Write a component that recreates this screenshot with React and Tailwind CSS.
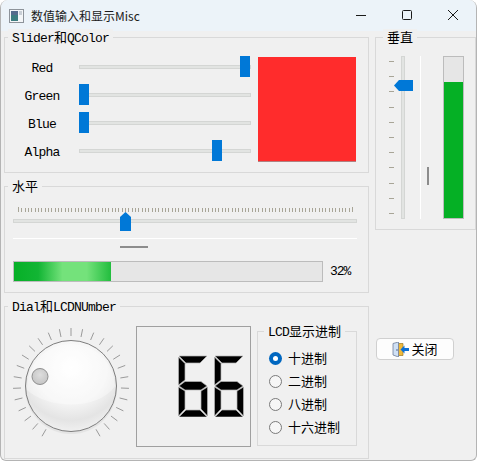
const cjk = "font-['Noto_Sans_CJK_SC',sans-serif]";
const mono = "font-['Liberation_Mono','Noto_Sans_CJK_SC',monospace]";

const Group = ({ title, className, legendClass = "left-[3px]", children }) => (
  <div className={`relative border border-[#d9d9d9] ${className}`}>
    <div className={`absolute top-[-9px] ${legendClass} bg-[#f0f0f0] px-[4px] text-[13px] tracking-[-0.8px] leading-[16px] whitespace-nowrap text-black ${mono}`}>{title}</div>
    {children}
  </div>
);

const C = ({ children }) => <span className={`text-[13px] tracking-normal ${cjk}`}>{children}</span>;

const HSlider = ({ label, offset }) => (
  <div className="flex items-center h-[21px]">
    <div className={`w-[74px] pt-[5px] text-center text-[13px] tracking-[-0.8px] text-black ${mono}`}>{label}</div>
    <div className="relative w-[172px] h-[4px] bg-[#e2e4e2] border border-[#d4d6d4]">
      <div className={`absolute top-[-10px] w-[10px] h-[21px] bg-[#0078d7] ${offset}`}></div>
    </div>
  </div>
);

const tickList = Array.from({ length: 101 }, (_, i) => i);

const HorizontalTicks = () => (
  <svg width="344" height="6" className="block">
    {tickList.map((i) => (
      <rect key={i} x={5 + i * 3.34} y={i === 100 || i === 0 ? 0 : 1} width="1" height={i === 100 || i === 0 ? 5 : 4} fill="#a8a597" shapeRendering="crispEdges" />
    ))}
  </svg>
);

const dialTicks = Array.from({ length: 27 }, (_, i) => -150 + i * (300 / 26));

const Dial = () => (
  <svg width="124" height="124" viewBox="0 0 124 124" className="block">
    <defs>
      <radialGradient id="face" cx="50%" cy="30%" r="72%">
        <stop offset="0" stopColor="#ffffff" />
        <stop offset="0.55" stopColor="#f4f4f4" />
        <stop offset="0.8" stopColor="#e4e4e4" />
        <stop offset="1" stopColor="#f2f2f2" />
      </radialGradient>
      <radialGradient id="knob" cx="50%" cy="40%" r="60%">
        <stop offset="0" stopColor="#dedede" />
        <stop offset="1" stopColor="#c4c4c4" />
      </radialGradient>
    </defs>
    {dialTicks.map((a) => {
      const r = (a * Math.PI) / 180;
      return (
        <line key={a} x1={62 + 50 * Math.sin(r)} y1={62 - 50 * Math.cos(r)} x2={62 + 58 * Math.sin(r)} y2={62 - 58 * Math.cos(r)} stroke="#9a9a9a" strokeWidth="1" />
      );
    })}
    <circle cx="62" cy="64" r="46" fill="#d8d8d8" opacity="0.5" />
    <circle cx="62" cy="62" r="45.5" fill="url(#face)" stroke="#7d7d7d" strokeWidth="1" />
    <path d="M18 66 A44 44 0 1 1 106 62 C90 86 40 86 18 66Z" fill="#ffffff" opacity="0.35" />
    <circle cx="31" cy="52.5" r="8" fill="url(#knob)" stroke="#8f8f8f" strokeWidth="1" />
  </svg>
);

const Digit = () => (
  <svg width="30" height="62" viewBox="0 0 30 62" className="block">
    <g fill="#000000" stroke="#b5b5b5" strokeWidth="0.7">
      <polygon points="1,1 29,1 22,8 8,8" />
      <polygon points="0.5,2 7,8.5 7,25 0.5,30" />
      <polygon points="1,31 7,26.5 23,26.5 29,31 23,35 7,35" />
      <polygon points="0.5,32 7,36 7,54 0.5,61" />
      <polygon points="29.5,32 23,36 23,54 29.5,61" />
      <polygon points="1,62 8,55 22,55 29,62" />
    </g>
  </svg>
);

const Radio = ({ label, checked }) => (
  <div className="flex items-center h-[23px]">
    {checked ? (
      <div className="w-[13px] h-[13px] rounded-full bg-[#0067c0] flex items-center justify-center">
        <div className="w-[5px] h-[5px] rounded-full bg-white"></div>
      </div>
    ) : (
      <div className="w-[13px] h-[13px] rounded-full border border-[#7a7a7a] bg-[#f6f6f6]"></div>
    )}
    <span className={`ml-[6px] pb-[2px] text-[13px] leading-[16px] text-black ${cjk}`}>{label}</span>
  </div>
);

const DoorIcon = () => (
  <svg width="17" height="15" viewBox="0 0 17 15" className="block">
    <path d="M6 1.5h5v12H6z" fill="#f0b93a" stroke="#9a7a2a" strokeWidth="0.7" />
    <path d="M1 1.5L6.5 0v15L1 13z" fill="#cfe0f5" stroke="#6f7f9c" strokeWidth="0.8" />
    <circle cx="5" cy="8" r="0.8" fill="#3f5a85" />
    <path d="M8.5 7.5L12.5 3.5V6H17V9H12.5V11.5Z" fill="#0a6fd6" />
  </svg>
);

export default function App() {
  return (
    <div className="w-[477px] h-[461px] bg-[#f0f0f0] border-l border-r border-b border-[#b4b4b4] border-t-[#a8a8a8] rounded-t-[8px] rounded-b-[6px] overflow-hidden flex flex-col">
      {/* title bar */}
      <div className="h-[31px] shrink-0 bg-[#ecf3f9] flex items-center">
        <svg width="15" height="14" viewBox="0 0 15 14" className="ml-[8px]">
          <rect x="0.5" y="0.5" width="14" height="13" fill="#f4f6f8" stroke="#8d939a" />
          <rect x="2" y="2" width="7" height="10" fill="#3d7d80" />
          <rect x="2" y="2" width="7" height="4" fill="#556b8c" />
          <rect x="10" y="2" width="3" height="4" fill="#c9cfd6" />
        </svg>
        <div className={`ml-[7px] text-[12px] text-[#1a1a1a] whitespace-nowrap ${cjk}`}>数值输入和显示Misc</div>
        <div className="ml-auto flex items-center h-full">
          <svg width="46" height="31" viewBox="0 0 46 31">
            <line x1="18" y1="15.5" x2="28" y2="15.5" stroke="#1a1a1a" />
          </svg>
          <svg width="46" height="31" viewBox="0 0 46 31">
            <rect x="18.5" y="10.5" width="9" height="9" rx="1" fill="none" stroke="#1a1a1a" />
          </svg>
          <svg width="46" height="31" viewBox="0 0 46 31">
            <path d="M18 10l10 10M28 10L18 20" stroke="#1a1a1a" fill="none" />
          </svg>
        </div>
      </div>

      <div className="flex flex-1 pt-[6px] pl-[3px]">
        {/* left column */}
        <div className="w-[365px] shrink-0 flex flex-col">
          <Group title={<>Slider<C>和</C>QColor</>} className="h-[136px] flex pt-[18px]">
            <div className="flex flex-col gap-[7px] w-[247px]">
              <HSlider label="Red" offset="left-[160px]" />
              <HSlider label="Green" offset="left-[-1px]" />
              <HSlider label="Blue" offset="left-[-1px]" />
              <HSlider label="Alpha" offset="left-[132px]" />
            </div>
            <div className="ml-[6px] w-[98px] h-[105px] bg-[#ff2c2c] border-b border-[#b08080] mt-[1px]"></div>
          </Group>

          <Group title={<C>水平</C>} className="h-[107px] mt-[13px] px-[8px]">
            <div className="pt-[20px] w-[344px]">
              <HorizontalTicks />
              <div className="relative mt-[6px] h-[4px] bg-[#e2e4e2] border border-[#d4d6d4]">
                <svg width="11" height="19" viewBox="0 0 11 19" className="absolute left-[106px] top-[-8px]">
                  <path d="M0 5L5.5 0L11 5V19H0Z" fill="#0078d7" />
                </svg>
              </div>
              <div className="mt-[15px] h-[1px] bg-white"></div>
              <div className="mt-[7px] ml-[107px] w-[28px] h-[2px] bg-[#8c8c8c]"></div>
              <div className="flex items-center mt-[13px]">
                <div className="w-[310px] h-[21px] shrink-0 bg-[#e6e6e6] border border-[#bcbcbc]">
                  <div className="w-[97px] h-full bg-[linear-gradient(90deg,#06b027_0%,#12b534_25%,#74e27b_50%,#74e27b_75%,#22bd3e_100%)]"></div>
                </div>
                <div className={`ml-[7px] pt-[1px] text-[13px] tracking-[-1px] text-black ${mono}`}>32%</div>
              </div>
            </div>
          </Group>

          <Group title={<>Dial<C>和</C>LCDNUmber</>} className="h-[153px] mt-[13px] flex">
            <div className="pl-[4px] pt-[17px]">
              <Dial />
            </div>
            <div className="ml-[3px] mt-[19px] w-[115px] h-[121px] border border-[#a0a0a0] shrink-0 flex justify-end items-start pt-[28px] pr-[6px] gap-[6px]">
              <Digit />
              <Digit />
            </div>
            <Group title={<>LCD<C>显示进制</C></>} legendClass="left-[6px]" className="ml-[6px] mt-[24px] w-[100px] h-[115px] pl-[11px] pt-[15px]">
              <Radio label="十进制" checked />
              <Radio label="二进制" />
              <Radio label="八进制" />
              <Radio label="十六进制" />
            </Group>
          </Group>
        </div>

        {/* right column */}
        <div className="ml-[6px] flex flex-col flex-1">
          <Group title={<C>垂直</C>} legendClass="left-[7px]" className="h-[193px] flex pt-[18px]">
            <svg width="8" height="164" viewBox="0 0 8 164" className="ml-[13px] shrink-0">
              {[5, 20, 35, 51, 66, 81, 96, 111, 127, 142, 157].map((y) => (
                <rect key={y} x="0" y={y} width="5" height="1" fill="#a8a597" />
              ))}
            </svg>
            <div className="relative ml-[4px] w-[4px] h-[163px] bg-[#e2e4e2] border border-[#d4d6d4] shrink-0">
              <svg width="19" height="11" viewBox="0 0 19 11" className="absolute left-[-8px] top-[23px]">
                <path d="M5 0H19V11H5L0 5.5Z" fill="#0078d7" />
              </svg>
            </div>
            <div className="ml-[15px] w-[1px] h-[163px] bg-white shrink-0"></div>
            <div className="ml-[6px] mt-[111px] w-[2px] h-[18px] bg-[#8c8c8c] shrink-0"></div>
            <div className="ml-[14px] w-[21px] h-[163px] bg-[#e6e6e6] border border-[#bcbcbc] flex flex-col justify-end shrink-0">
              <div className="h-[136px] bg-[#05b025]"></div>
            </div>
          </Group>
          <button className={`mt-[108px] ml-[1px] w-[78px] h-[22px] bg-[#fdfdfd] border border-[#d0d0d0] rounded-[4px] flex items-center justify-center gap-[2px] text-[13px] text-black ${cjk}`}>
            <DoorIcon />
            <span>关闭</span>
          </button>
        </div>
      </div>
    </div>
  );
}
